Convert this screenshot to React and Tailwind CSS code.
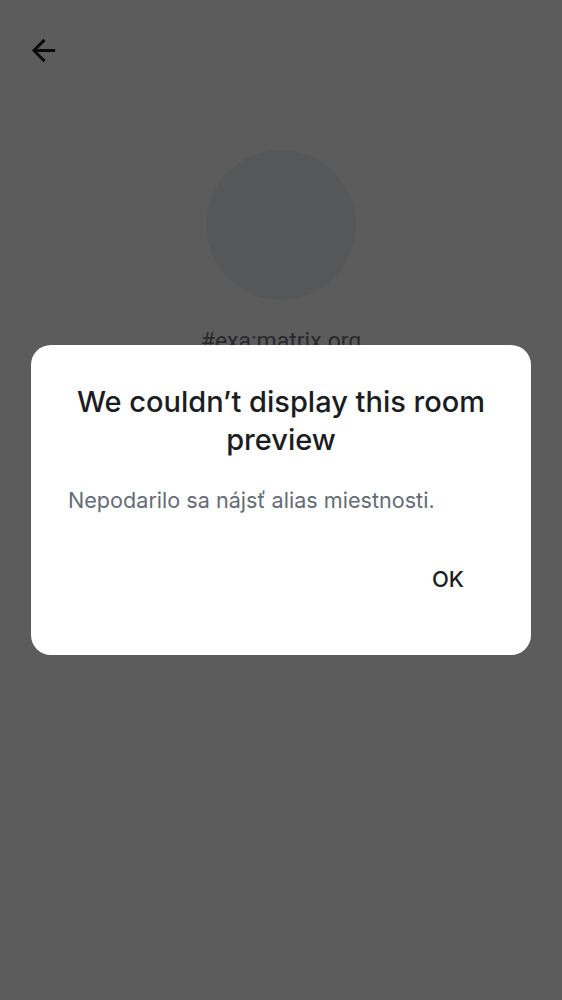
import React from "react";

export default function App() {
  return (
    <div
      className="relative w-[562px] h-[1000px] overflow-hidden bg-white"
      style={{ fontFamily: "Inter, Roboto, 'Noto Sans', sans-serif" }}
    >
      {/* underlying page */}
      <div className="flex flex-col">
        <div className="h-[100px] flex items-center px-[26px]">
          <svg width="35" height="35" viewBox="0 0 24 24" className="text-[#1b1d22]">
            <path
              fill="currentColor"
              d="M20 11H7.83l5.59-5.59L12 4l-8 8 8 8 1.41-1.41L7.83 13H20v-2z"
            />
          </svg>
        </div>
        <div className="flex flex-col items-center pt-[50px]">
          <div className="w-[150px] h-[150px] rounded-full bg-[#eef2f7]" />
          <div
            className="mt-[26px] text-[23px] leading-[32px] text-[#6f737a]"
            style={{ fontFamily: "Roboto, sans-serif" }}
          >
            #exa:matrix.org
          </div>
        </div>
      </div>

      {/* scrim */}
      <div className="absolute inset-0 bg-[rgba(0,0,0,0.64)]" />

      {/* dialog */}
      <div className="absolute left-[31px] top-[345px] w-[500px] h-[310px] rounded-[20px] bg-white flex flex-col px-[37px] pt-[38px]">
        <div className="text-center text-[29px] leading-[38px] font-medium text-[#1b1d22]">
          We couldn’t display this room preview
        </div>
        <div className="mt-[25px] text-[21.6px] leading-[32px] text-[#656c76]">
          Nepodarilo sa nájsť alias miestnosti.
        </div>
        <div className="mt-[47px] flex justify-end">
          <div className="text-[22px] leading-[32px] font-medium text-[#1b1d22] pr-[30px]">
            OK
          </div>
        </div>
      </div>
    </div>
  );
}
